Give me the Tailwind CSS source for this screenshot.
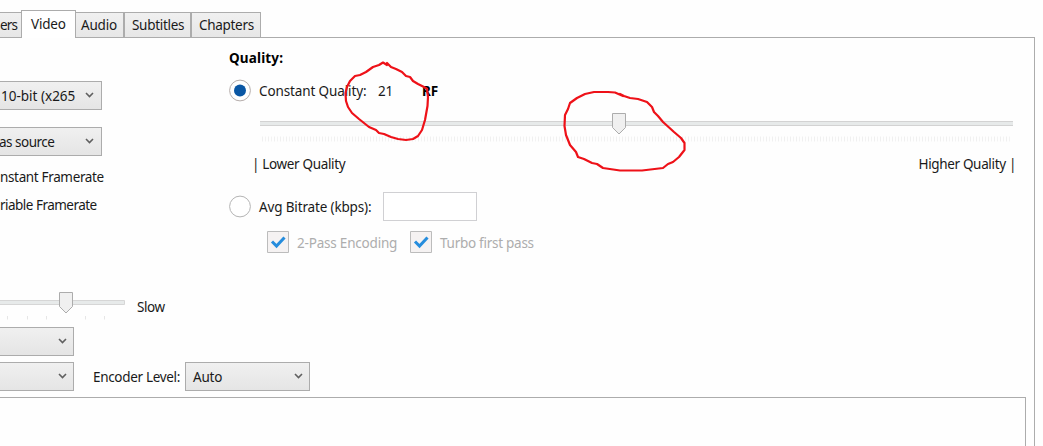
<!DOCTYPE html>
<html lang="en">
<head>
<meta charset="utf-8">
<title>Video settings</title>
<script src="https://cdn.jsdelivr.net/npm/@tailwindcss/browser@4"></script>
</head>
<body class="bg-white">
<div class="relative flex h-[446px] w-[1043px] flex-col overflow-hidden bg-[#fefefe] font-['Noto_Sans','Open_Sans',sans-serif] text-[13.5px] leading-5 tracking-[-0.2px] whitespace-nowrap text-[#1a1a1a]">
  <!-- Tabs -->
  <div class="z-10 flex h-[37px] shrink-0 items-end">
    <div class="flex h-[25px] w-[21px] items-center border-t border-[#acacac] bg-gradient-to-b from-[#f0f0f0] to-[#e7e7e7] tracking-[-0.8px]">ers</div>
    <div class="-mb-px flex h-[28px] w-[55px] items-center border border-b-0 border-[#acacac] bg-white pb-px pl-[9px]">Video</div>
    <div class="flex h-[25px] w-[48px] items-center border-t border-r border-[#acacac] bg-gradient-to-b from-[#f0f0f0] to-[#e7e7e7] pl-[5px]">Audio</div>
    <div class="flex h-[25px] w-[67px] items-center border-t border-r border-l border-[#acacac] bg-gradient-to-b from-[#f0f0f0] to-[#e7e7e7] pl-[7px] tracking-[-0.3px]">Subtitles</div>
    <div class="flex h-[25px] w-[70px] items-center border-t border-r border-l border-[#acacac] bg-gradient-to-b from-[#f0f0f0] to-[#e7e7e7] pl-[7px] tracking-[-0.3px]">Chapters</div>
  </div>

  <!-- Tab page -->
  <div class="flex h-[409px] w-[1035px] flex-col border-t border-r border-[#acacac]">
    <div class="flex h-[254px] shrink-0">
      <!-- Encoder and framerate -->
      <div class="flex w-[229px] flex-col pt-[43px]">
        <div class="flex h-[29px] w-[102px] items-center justify-between border border-l-0 border-[#acacac] bg-gradient-to-b from-[#f0f0f0] to-[#e5e5e5] pr-[7px]">
          <span class="w-[76px] pt-px pl-px tracking-[0px]">10-bit (x265</span>
          <svg class="mb-[2px]" width="9" height="6" viewBox="0 0 9 6" fill="none" stroke="#606060" stroke-width="1.6"><path d="M1 1l3.5 3.5L8 1"/></svg>
        </div>
        <div class="mt-[17px] flex h-[29px] w-[102px] items-center justify-between border border-l-0 border-[#acacac] bg-gradient-to-b from-[#f0f0f0] to-[#e5e5e5] pr-[7px]">
          <span class="-ml-px pt-px tracking-[-0.5px]">as source</span>
          <svg class="mb-[2px]" width="9" height="6" viewBox="0 0 9 6" fill="none" stroke="#606060" stroke-width="1.6"><path d="M1 1l3.5 3.5L8 1"/></svg>
        </div>
        <div class="mt-[11px] h-5 w-[104px] tracking-[-0.35px]">nstant Framerate</div>
        <div class="mt-2 h-5 w-[97px] tracking-[-0.52px]">riable Framerate</div>
      </div>

      <!-- Quality -->
      <div class="flex w-[790px] flex-col pt-[10px]">
        <div class="h-5 font-bold tracking-[0.15px] text-black">Quality:</div>
        <div class="mt-[11px] flex h-[23px] items-center">
          <svg width="23" height="23" viewBox="0 0 23 23"><circle cx="11" cy="11.5" r="10.4" fill="#fff" stroke="#b5adab"/><circle cx="11" cy="11.5" r="6" fill="#0a57a4"/></svg>
          <span class="ml-[7px] w-[119px] pt-px tracking-[-0.12px]">Constant Quality:</span>
          <span class="w-[44px] pt-px">21</span>
          <span class="pt-px font-bold text-black">RF</span>
        </div>
        <div class="mt-[11px] ml-[31px] flex h-[22px] w-[753px] flex-col">
          <svg width="753" height="32" viewBox="0 0 753 32" class="shrink-0">
            <path d="M0 8.500h753M0 12.500h753" stroke="#d3d3d3"/>
            <path d="M0 10.500h753" stroke="#e7eaea" stroke-width="3"/>
            <path d="M2 26h750" stroke="#f0f0f0" stroke-width="5" stroke-dasharray="1 5"/><path d="M5 26h747" stroke="#f3f3f3" stroke-width="5" stroke-dasharray="1 5"/>
            <path d="M352.500.5h13v14l-6.500 6.500-6.500-6.500z" fill="#f0f0f0" stroke="#acacac"/>
          </svg>
        </div>
        <div class="mt-[19px] flex h-5 justify-between pr-[3px] pl-[23px] tracking-[-0.34px]"><span>| Lower Quality</span><span>Higher Quality |</span></div>
        <div class="mt-[18px] flex h-[29px] items-center">
          <svg width="23" height="23" viewBox="0 0 23 23"><circle cx="11" cy="11.5" r="10.4" fill="#fff" stroke="#b4b4b4"/></svg>
          <span class="ml-[7px] w-[124px] pt-px tracking-[-0.15px]">Avg Bitrate (kbps):</span>
          <span class="h-[29px] w-[94px] border border-[#d0d0d3] bg-white"></span>
        </div>
        <div class="mt-[10px] ml-[38px] flex h-[22px] items-center text-[#adadad]">
          <svg width="22" height="22" viewBox="0 0 22 22"><path d="M.5.5h21v21H.5z" fill="#f5f2f2" stroke="#bcbcbc"/><path d="M5 10.500l4.500 4.500 8-8.500" fill="none" stroke="#268ddd" stroke-width="3"/></svg>
          <span class="ml-[8px] w-[113px] pt-[2px]">2-Pass Encoding</span>
          <svg width="22" height="22" viewBox="0 0 22 22"><path d="M.5.5h21v21H.5z" fill="#f5f2f2" stroke="#bcbcbc"/><path d="M5 10.500l4.500 4.500 8-8.500" fill="none" stroke="#268ddd" stroke-width="3"/></svg>
          <span class="ml-[8px] pt-[2px] tracking-[-0.27px]">Turbo first pass</span>
        </div>
      </div>
    </div>

    <!-- Preset speed -->
    <div class="flex h-[35px] shrink-0">
      <svg width="126" height="30" viewBox="0 0 126 30">
        <path d="M-1 8.500h125.500v4H-1z" fill="#e7eaea" stroke="#d6d6d6"/>
        <path d="M7.500 24v3.500M27.500 24v3.500M46.500 24v3.500M85.500 24v3.500M104.500 24v3.500" stroke="#e6e6e6"/>
        <path d="M59.500.5h13v14l-6.500 6.500-6.500-6.500z" fill="#f0f0f0" stroke="#acacac"/>
      </svg>
      <span class="mt-[5px] ml-[11px] tracking-[-0.4px]">Slow</span>
    </div>
    <div class="flex h-[29px] w-[74px] shrink-0 items-center justify-end border border-l-0 border-[#acacac] bg-gradient-to-b from-[#f0f0f0] to-[#e5e5e5] pr-[6px]">
      <svg class="mb-[2px]" width="9" height="6" viewBox="0 0 9 6" fill="none" stroke="#606060" stroke-width="1.6"><path d="M1 1l3.5 3.5L8 1"/></svg>
    </div>
    <div class="mt-[6px] flex h-[29px] shrink-0 items-center">
      <div class="flex h-[29px] w-[74px] items-center justify-end border border-l-0 border-[#acacac] bg-gradient-to-b from-[#f0f0f0] to-[#e5e5e5] pr-[6px]">
        <svg class="mb-[2px]" width="9" height="6" viewBox="0 0 9 6" fill="none" stroke="#606060" stroke-width="1.6"><path d="M1 1l3.5 3.5L8 1"/></svg>
      </div>
      <span class="ml-[19px] w-[92px] pt-px tracking-[-0.32px]">Encoder Level:</span>
      <div class="flex h-[29px] w-[125px] items-center justify-between border border-[#acacac] bg-gradient-to-b from-[#f0f0f0] to-[#e5e5e5] pr-[6px] pl-[7px]">
        <span class="pt-px">Auto</span>
        <svg class="mb-[2px]" width="9" height="6" viewBox="0 0 9 6" fill="none" stroke="#606060" stroke-width="1.6"><path d="M1 1l3.5 3.5L8 1"/></svg>
      </div>
    </div>
    <div class="mt-[6px] w-[1026px] flex-1 border-t border-r border-[#acacac]"></div>
  </div>

  <!-- Hand-drawn highlights -->
  <svg class="pointer-events-none absolute inset-0 z-20" width="1043" height="446" viewBox="0 0 1043 446" fill="none" stroke="#ee1118" stroke-width="2.2" stroke-linejoin="round" stroke-linecap="round">
    <path d="M387 65L383 62.500L379 65L373 67L366 72L360 75L355 76L350 81L347 87L345.500 93L346 101L348 107L352 113L359 119L369 127L376 130L379 133L384 134L391 137L398 139L406 140L413 139L418 136L422 130L425 120L427.500 106L428 97L427 89L424 87L418 84L413 81L410 77L406 76L402 72L396 69L391 67L387 63"/>
    <path d="M623 96L615 92.500L608 92L594 92L585 94L577 98L570 103L568 109L565 115L564.500 126L566 135L570 145L576 152L578 157L584 159L592 163L597 164L603 168L620 170.500L642 170.500L663 168L668 164L673 162L679 157L684.500 150L684.500 143L681 138L674 132L663 122L658 116L654 112L652 107L647 102L638 99L630 98L624 96L620 94"/>
  </svg>
</div>
</body>
</html>
